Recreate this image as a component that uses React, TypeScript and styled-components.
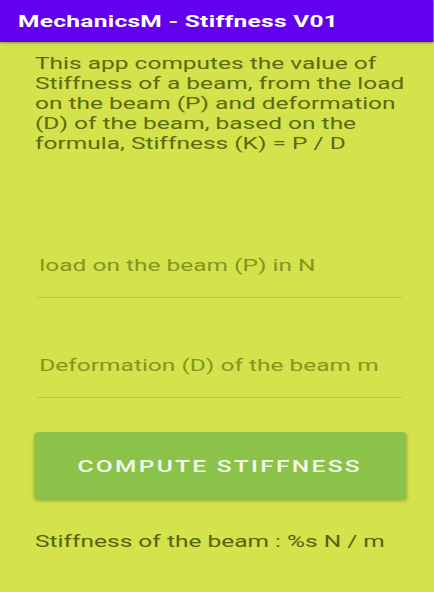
import React from 'react';
import styled, { createGlobalStyle } from 'styled-components';

// The screenshot is stretched sideways; lay out at phone width and widen it.
const STRETCH = 1.44;
const SCREEN_W = 434;
const SCREEN_H = 592;

const GlobalStyle = createGlobalStyle`
  html, body {
    margin: 0;
    padding: 0;
    background: #d4e24b;
    overflow: hidden;
  }
  body {
    font-family: Roboto, "Liberation Sans", sans-serif;
  }
`;

const Screen = styled.div`
  width: ${SCREEN_W / STRETCH}px;
  height: ${SCREEN_H}px;
  background: #d4e24b;
  display: flex;
  flex-direction: column;
  transform: scaleX(${STRETCH});
  transform-origin: left top;
`;

const AppBar = styled.header`
  height: 42px;
  flex-shrink: 0;
  background: #6200ee;
  display: flex;
  align-items: center;
  padding-left: 12.5px;
  box-shadow: 0 1px 2px rgba(0, 0, 0, 0.35);
`;

const Title = styled.h1`
  margin: 0;
  color: #ffffff;
  font-size: 17px;
  font-weight: 700;
  letter-spacing: 0.2px;
`;

const Content = styled.main`
  display: flex;
  flex-direction: column;
  padding: 11px 20px 0 24.3px;
`;

const Brief = styled.p`
  margin: 0;
  color: #5b6a0e;
  font-size: 17px;
  line-height: 20px;
`;

const Field = styled.div<{ $top: number }>`
  margin-top: ${p => p.$top}px;
  margin-left: 1.5px;
  margin-right: 2px;
  padding: 0 0 22px 1.5px;
  border-bottom: 1px solid #b5c746;
`;

const Hint = styled.span`
  display: block;
  color: #849620;
  font-size: 17px;
  line-height: 20px;
`;

const Button = styled.button`
  margin-top: 34px;
  margin-left: -0.7px;
  height: 67px;
  width: 258px;
  border: none;
  border-radius: 3px;
  background: #8bc34a;
  color: #f4f8ea;
  font-family: Roboto, "Liberation Sans", sans-serif;
  font-size: 17px;
  font-weight: 500;
  letter-spacing: 1.6px;
  text-transform: uppercase;
  box-shadow: 0 2px 3px rgba(0, 0, 0, 0.25);
`;

const Result = styled.p`
  margin: 32px 0 0;
  color: #55640c;
  font-size: 17px;
  line-height: 20px;
`;

export default function App() {
  return (
    <Screen>
      <GlobalStyle />
      <AppBar>
        <Title>MechanicsM - Stiffness V01</Title>
      </AppBar>
      <Content>
        <Brief>
          This app computes the value of Stiffness of a beam, from the load on the beam (P) and
          deformation (D) of the beam, based on the formula, Stiffness (K) = P / D
        </Brief>
        <Field $top={102}>
          <Hint>load on the beam (P) in N</Hint>
        </Field>
        <Field $top={57}>
          <Hint>Deformation (D) of the beam m</Hint>
        </Field>
        <Button>Compute Stiffness</Button>
        <Result>Stiffness of the beam : %s N / m</Result>
      </Content>
    </Screen>
  );
}
